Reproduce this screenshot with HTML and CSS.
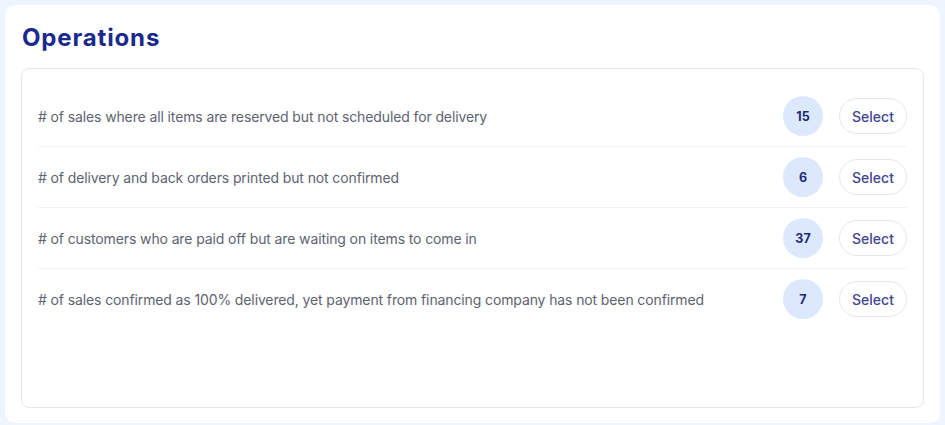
FILE: index.html
```html
<!DOCTYPE html>
<html>
<head>
<meta charset="utf-8">
<link rel="stylesheet" href="styles.css">
</head>
<body>
<div class="card">
  <h1 class="title">Operations</h1>
  <div class="panel">
    <div class="row">
      <span class="label"># of sales where all items are reserved but not scheduled for delivery</span>
      <span class="badge">15</span>
      <button class="select">Select</button>
    </div>
    <div class="row">
      <span class="label"># of delivery and back orders printed but not confirmed</span>
      <span class="badge">6</span>
      <button class="select">Select</button>
    </div>
    <div class="row">
      <span class="label"># of customers who are paid off but are waiting on items to come in</span>
      <span class="badge">37</span>
      <button class="select">Select</button>
    </div>
    <div class="row last">
      <span class="label"># of sales confirmed as 100% delivered, yet payment from financing company has not been confirmed</span>
      <span class="badge">7</span>
      <button class="select">Select</button>
    </div>
  </div>
</div>
</body>
</html>
```

FILE: styles.css
```css
html, body {
  margin: 0;
  padding: 0;
  background: #eef5fe;
  font-family: Inter, "Liberation Sans", sans-serif;
}
body {
  padding: 5px 5px 2px 5px;
  height: 425px;
  box-sizing: border-box;
}
.card {
  background: #ffffff;
  border-radius: 10px;
  height: 418px;
  box-sizing: border-box;
  padding: 20px 16px 15px 16px;
  display: flex;
  flex-direction: column;
}
.title {
  margin: 0 0 17px 1px;
  font-family: Inter, "Open Sans", sans-serif;
  font-weight: 750;
  font-size: 24px;
  line-height: 26px;
  color: #1a2a8c;
  letter-spacing: 0.85px;
}
.panel {
  flex: 1;
  border: 1px solid #e5e7eb;
  border-radius: 8px;
  padding: 17px 16px 0 16px;
}
.row {
  display: flex;
  align-items: center;
  padding: 10px 0;
  border-bottom: 1px solid #f1f2f5;
}
.row.last {
  border-bottom: none;
}
.label {
  flex: 1;
  font-size: 14px;
  letter-spacing: -0.12px;
  color: #5d6371;
}
.badge {
  width: 40px;
  height: 40px;
  border-radius: 50%;
  background: #dce9fd;
  color: #1e2a77;
  font-size: 12.5px;
  font-weight: 700;
  display: flex;
  align-items: center;
  justify-content: center;
  margin-right: 16px;
}
.select {
  width: 68px;
  height: 36px;
  border: 1px solid #e5e7eb;
  border-radius: 18px;
  background: #ffffff;
  color: #42468f;
  font-family: Inter, "Liberation Sans", sans-serif;
  font-size: 14px;
  font-weight: 500;
  padding: 0;
}
```
